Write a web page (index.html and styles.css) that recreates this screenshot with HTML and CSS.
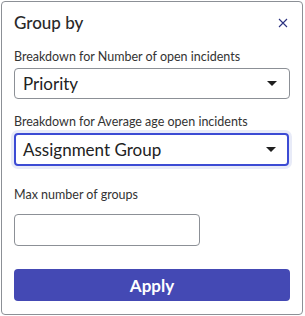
FILE: index.html
```html
<!DOCTYPE html>
<html lang="en">
<head>
    <meta charset="UTF-8">
    <meta name="viewport" content="width=device-width, initial-scale=1.0">
    <title>Group by</title>
    <link rel="stylesheet" href="styles.css">
</head>
<body>
    <div class="popover">
        <div class="header">
            <h2>Group by</h2>
            <button class="close" aria-label="Close">
                <svg width="10" height="10" viewBox="0 0 10 10"><path d="M1 1L9 9M9 1L1 9" stroke="#2b3280" stroke-width="1.1" fill="none"/></svg>
            </button>
        </div>

        <label class="field-label">Breakdown for Number of open incidents</label>
        <div class="select">
            <span>Priority</span>
            <span class="caret"></span>
        </div>

        <label class="field-label second">Breakdown for Average age open incidents</label>
        <div class="select focused">
            <span>Assignment Group</span>
            <span class="caret"></span>
        </div>

        <label class="field-label third">Max number of groups</label>
        <input class="num-input" type="text">

        <button class="apply">Apply</button>
    </div>
</body>
</html>
```

FILE: styles.css
```css
body{
    margin: 0;
    padding: 1px;
    font-family: Lato, "Open Sans", sans-serif;
    background-color: #fff;
    color: #2e2e2e;
}
.popover{
    width: 276px;
    height: 312px;
    box-sizing: content-box;
    border: 1px solid #8c9096;
    border-radius: 4px;
    padding: 0 12px;
    display: flex;
    flex-direction: column;
    align-items: flex-start;
}
.header{
    width: 100%;
    display: flex;
    justify-content: space-between;
    align-items: center;
    margin-top: 11px;
}
.header h2{
    margin: 0;
    font-size: 17px;
    font-weight: 500;
    line-height: 20px;
    color: #2a2a2a;
}
.close{
    border: none;
    background: none;
    padding: 0;
    margin-right: 2px;
    display: flex;
    cursor: pointer;
}
.field-label{
    font-size: 12.5px;
    line-height: 16px;
    margin-top: 16px;
    color: #333;
}
.field-label.second{
    margin-top: 15px;
}
.field-label.third{
    margin-top: 21px;
}
.select{
    width: 276px;
    height: 31px;
    box-sizing: border-box;
    margin-top: 3px;
    border: 1px solid #8c9096;
    border-radius: 4px;
    padding: 0 12px 0 8px;
    display: flex;
    justify-content: space-between;
    align-items: center;
    font-size: 17px;
    color: #222;
}
.select.focused{
    width: 275px;
    height: 33px;
    border: 2px solid #3c4bd4;
    padding-left: 7px;
    padding-right: 11px;
    box-shadow: 0 0 0 3px #e8ebf8;
}
.caret{
    width: 0;
    height: 0;
    border-left: 5px solid transparent;
    border-right: 5px solid transparent;
    border-top: 5px solid #1f1f1f;
}
.num-input{
    width: 186px;
    height: 32px;
    box-sizing: border-box;
    margin-top: 11px;
    border: 1px solid #8c9096;
    border-radius: 4px;
    font-family: inherit;
    font-size: 15px;
}
.apply{
    width: 276px;
    height: 32px;
    margin-top: 23px;
    border: none;
    border-radius: 4px;
    background-color: #4449b4;
    color: #fff;
    font-family: inherit;
    font-size: 17px;
    font-weight: bold;
    cursor: pointer;
}
```
